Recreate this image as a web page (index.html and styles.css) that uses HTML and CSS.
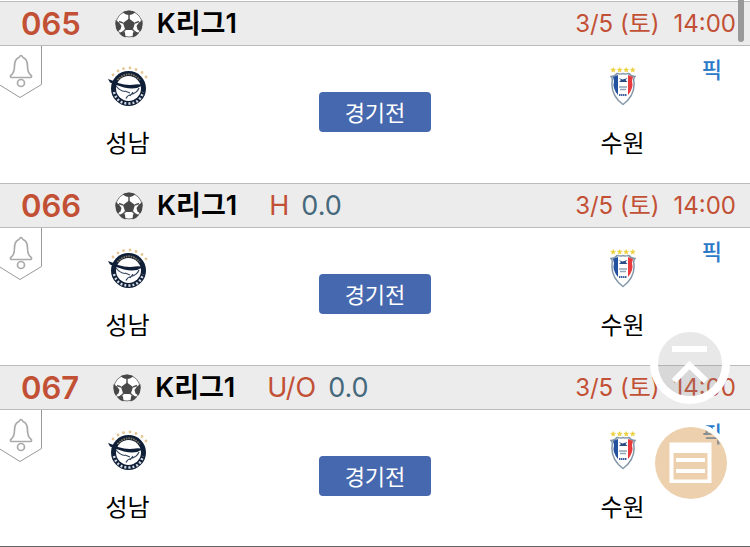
FILE: index.html
```
<!DOCTYPE html>
<html lang="ko">
  <head>
    <meta charset="utf-8">
    <title>경기 목록</title>
    <meta name="viewport" content="width=device-width, initial-scale=1.0">
    <link rel="stylesheet" href="styles.css">
  </head>
  <body>
    <svg class="defs" aria-hidden="true">
      <symbol id="ball" viewBox="0 0 28 28">
        <circle cx="14" cy="14" r="13.5" fill="#fff"/>
        <circle cx="14" cy="14" r="13" fill="none" stroke="#777" stroke-width="1"/>
        <g fill="#484848">
          <path d="M14 8.500l6 4.400-2.300 7h-7.400l-2.300-7z"/>
          <path d="M7.500 2.200Q14-1.200 20.500 2.200L17.500 4.200 14 5.200l-3.500-1z"/>
          <path d="M27.300 10Q28.500 16 25.500 21.500l-3-2-1-3.500 2.500-3.500z"/>
          <path d="M.7 10Q-.5 16 2.500 21.500L5.500 19.500l1-3.500L4 12.500z"/>
          <path d="M4 23l4-1.700 2 1.200.5 5Q6.500 26.500 4 23zM24 23l-4-1.700-2 1.200-.5 5Q21.500 26.500 24 23z"/>
        </g>
        <path d="M14 4v5M20 13l4-1.500M17.500 19.500l3 3M10.500 19.500l-3 3M8 13l-4-1.500" stroke="#555" stroke-width="1.500"/>
      </symbol>

      <symbol id="bell" viewBox="0 0 43 52">
        <path d="M41.500 0v38.500L20 51.500-1 38.500" fill="#fff" stroke="#999" stroke-width="1"/>
        <path d="M21 9.500c-1.200 0-1 1.500-2.500 2.200-3.500 1.600-4 4-4 8.300 0 5-1 7.500-3.500 9.200-.7.500-.7 2.300 0 2.300h20c.7 0 .7-1.800 0-2.300-2.500-1.700-3.500-4.200-3.500-9.200 0-4.300-.5-6.700-4-8.300C22 11 22.200 9.500 21 9.500z" fill="#fff" stroke="#aaa" stroke-width="1.700"/>
        <circle cx="21" cy="37" r="3.500" fill="#fff" stroke="#aaa" stroke-width="1.700"/>
      </symbol>

      <symbol id="seongnam" viewBox="0 0 40 40">
        <g fill="#e3c694">
          <circle cx="5" cy="9" r="1.400"/><circle cx="10" cy="5" r="1.400"/><circle cx="15.500" cy="2.700" r="1.400"/>
          <circle cx="22" cy="2" r="1.400"/><circle cx="28" cy="3.500" r="1.400"/><circle cx="34" cy="6.500" r="1.400"/><circle cx="38" cy="11" r="1.400"/>
        </g>
        <circle cx="20.500" cy="22.500" r="17.500" fill="#0f1f38"/>
        <circle cx="20.500" cy="22.500" r="12.500" fill="#fff"/>
        <path d="M9.500 14Q20.500 2.500 32 14" fill="none" stroke="#85795c" stroke-width="1.800" stroke-dasharray="1.500 1"/>
        <path d="M6 26Q9 37.500 20.500 37.500T35 26" fill="none" stroke="#d5dae1" stroke-width="2.500" stroke-dasharray="2 2"/>
        <path d="M0 13q5 1.500 10 4 8 2.500 15 1.800 6-1.300 11.500.7-5 .5-7.500 2.500-6 1-13-.5Q9 19.500 2 16.500z" fill="#0f1f38"/>
        <path d="M8 20q4 5 9 5.500M31 22q-2 5-8 6.500-4 1-5 4M25 26l-3 4M17 25l5 2" fill="none" stroke="#33445d" stroke-width="1.200"/>
      </symbol>

      <symbol id="suwon" viewBox="0 0 26 38">
        <g fill="#ecd348">
          <path id="star" d="M3.200 0l.9 1.700 1.900.3-1.400 1.400.4 2L3.200 4.500l-1.800.9.4-2L.4 2l1.900-.3z"/>
          <use href="#star" x="6.500"/><use href="#star" x="13"/><use href="#star" x="19.500"/>
        </g>
        <path d="M1 9.500q4 0 6-3 5 1 6 0 1 1 6 0 2 3 6 3-2 2-1 6 1 13-11 22Q1 28.500 2 15.500q1-4-1-6z" fill="#fff" stroke="#8397a9" stroke-width="1.500"/>
        <path d="M3 10l5-2v20q-6-7-4-14z" fill="#2450a0"/>
        <path d="M23 10l-5-2v20q6-7 4-14z" fill="#e83b3d"/>
        <path d="M8.500 11l4 1.500 5-1.500-2 2 2 2H9l2-2z" fill="#294c85"/>
        <path d="M9 20h8M10 22.500h6" stroke="#8da5b5" stroke-width="1.500"/>
        <path d="M9 28h8" stroke="#4162a2" stroke-width="2" stroke-dasharray="1.500 .5"/>
      </symbol>
    </svg>

    <main class="games">
      <section class="game">
        <header class="game-head">
          <span class="no">065</span>
          <svg class="ball"><use href="#ball"/></svg>
          <b class="league">K리그1</b>
          <time class="date"><span>3/5 (토)</span><span>14:00</span></time>
        </header>
        <div class="game-body">
          <button class="alarm" aria-label="알림"><svg><use href="#bell"/></svg></button>
          <div class="team"><svg class="home-logo"><use href="#seongnam"/></svg><span>성남</span></div>
          <div class="state"><button class="status">경기전</button></div>
          <div class="team"><svg class="away-logo"><use href="#suwon"/></svg><span>수원</span></div>
          <a class="pick" href="#">픽</a>
        </div>
      </section>

      <section class="game">
        <header class="game-head">
          <span class="no">066</span>
          <svg class="ball"><use href="#ball"/></svg>
          <b class="league">K리그1</b>
          <span class="type">H</span>
          <span class="line">0.0</span>
          <time class="date"><span>3/5 (토)</span><span>14:00</span></time>
        </header>
        <div class="game-body">
          <button class="alarm" aria-label="알림"><svg><use href="#bell"/></svg></button>
          <div class="team"><svg class="home-logo"><use href="#seongnam"/></svg><span>성남</span></div>
          <div class="state"><button class="status">경기전</button></div>
          <div class="team"><svg class="away-logo"><use href="#suwon"/></svg><span>수원</span></div>
          <a class="pick" href="#">픽</a>
        </div>
      </section>

      <section class="game">
        <header class="game-head">
          <span class="no">067</span>
          <svg class="ball"><use href="#ball"/></svg>
          <b class="league">K리그1</b>
          <span class="type">U/O</span>
          <span class="line">0.0</span>
          <time class="date"><span>3/5 (토)</span><span>14:00</span></time>
        </header>
        <div class="game-body">
          <button class="alarm" aria-label="알림"><svg><use href="#bell"/></svg></button>
          <div class="team"><svg class="home-logo"><use href="#seongnam"/></svg><span>성남</span></div>
          <div class="state"><button class="status">경기전</button></div>
          <div class="team"><svg class="away-logo"><use href="#suwon"/></svg><span>수원</span></div>
          <a class="pick" href="#">픽</a>
        </div>
      </section>
    </main>

    <div class="scrollbar"></div>

    <button class="float go-top" aria-label="맨 위로">
      <svg viewBox="0 0 80 80">
        <circle cx="40" cy="40" r="36" fill="#8c8c8c" fill-opacity=".2"/>
        <circle cx="40" cy="40" r="36" fill="none" stroke="#fff" stroke-width="8"/>
        <path d="M22 25h35M24 57l15.500-16L56 57" fill="none" stroke="#fff" stroke-width="6"/>
      </svg>
    </button>
    <button class="float cart" aria-label="선택 목록">
      <svg viewBox="0 0 80 80">
        <circle cx="40" cy="40" r="38" fill="none" stroke="#fff" stroke-width="5"/>
        <circle cx="40" cy="40" r="36" fill="#dba15d" fill-opacity=".5"/>
        <path d="M18.500 19.500h42V60h-42zM22.500 30v26.500h34V30z" fill="#fff" fill-rule="evenodd"/>
        <path d="M25 37h29M25 48h29" stroke="#fff" stroke-width="4"/>
      </svg>
    </button>
  </body>
</html>
```
FILE: styles.css
```
* {
  box-sizing: border-box;
}

body {
  margin: 0;
  background: #fff;
  color: #000;
  font-family: Inter, "Noto Sans CJK KR", sans-serif;
}

button {
  font-family: inherit;
  border: 0;
  padding: 0;
  background: none;
  cursor: pointer;
}

svg {
  display: block;
}

.defs {
  position: absolute;
  width: 0;
  height: 0;
}

.games {
  padding-top: 1px;
  border-bottom: 1px solid #666;
}

.game-head {
  display: flex;
  align-items: center;
  height: 45px;
  padding: 0 14px 0 21px;
  background: #ececec;
  border-top: 1px solid #bbb;
  border-bottom: 1px solid #bbb;
  line-height: 43px;
}

.no {
  color: #c25035;
  font-size: 31px;
  font-weight: 600;
}

.ball {
  width: 28px;
  height: 28px;
  margin: 0 14px 0 34px;
}

.league {
  font-size: 27px;
  font-weight: 600;
}

.type {
  margin-left: 32px;
  color: #c25035;
  font-size: 27px;
}

.line {
  margin-left: 12px;
  color: #45687c;
  font-size: 27px;
}

.date {
  display: flex;
  gap: 14px;
  margin-left: auto;
  color: #c25035;
  font-size: 24px;
}

.game-body {
  position: relative;
  display: grid;
  grid-template-columns: 34% 32% 34%;
  height: 137px;
}

.game:last-child .game-body {
  height: 136px;
}

.alarm {
  position: absolute;
  left: 0;
  top: 0;
}

.alarm svg {
  width: 43px;
  height: 52px;
}

.team {
  display: flex;
  flex-direction: column;
  align-items: center;
  padding-top: 20px;
  font-size: 24px;
  line-height: 36px;
}

.team span {
  margin-top: 20px;
}

.home-logo {
  width: 40px;
  height: 40px;
}

.away-logo {
  width: 26px;
  height: 40px;
}

.state {
  padding-top: 46px;
  text-align: center;
}

.status {
  width: 112px;
  height: 40px;
  padding-bottom: 3px;
  border-radius: 4px;
  background: #4668ae;
  color: #fff;
  font-size: 22px;
}

.pick {
  position: absolute;
  top: 8px;
  right: 28px;
  color: #2c7ac8;
  font-size: 22px;
  font-weight: 500;
  line-height: 32px;
  text-decoration: none;
}

.scrollbar {
  position: fixed;
  top: 0;
  right: 6px;
  width: 6px;
  height: 42px;
  border-radius: 0 0 3px 3px;
  background: #999;
}

.float {
  position: fixed;
  width: 80px;
  height: 80px;
}

.go-top {
  right: 20px;
  bottom: 143px;
}

.cart {
  right: 19px;
  bottom: 44px;
}
```
